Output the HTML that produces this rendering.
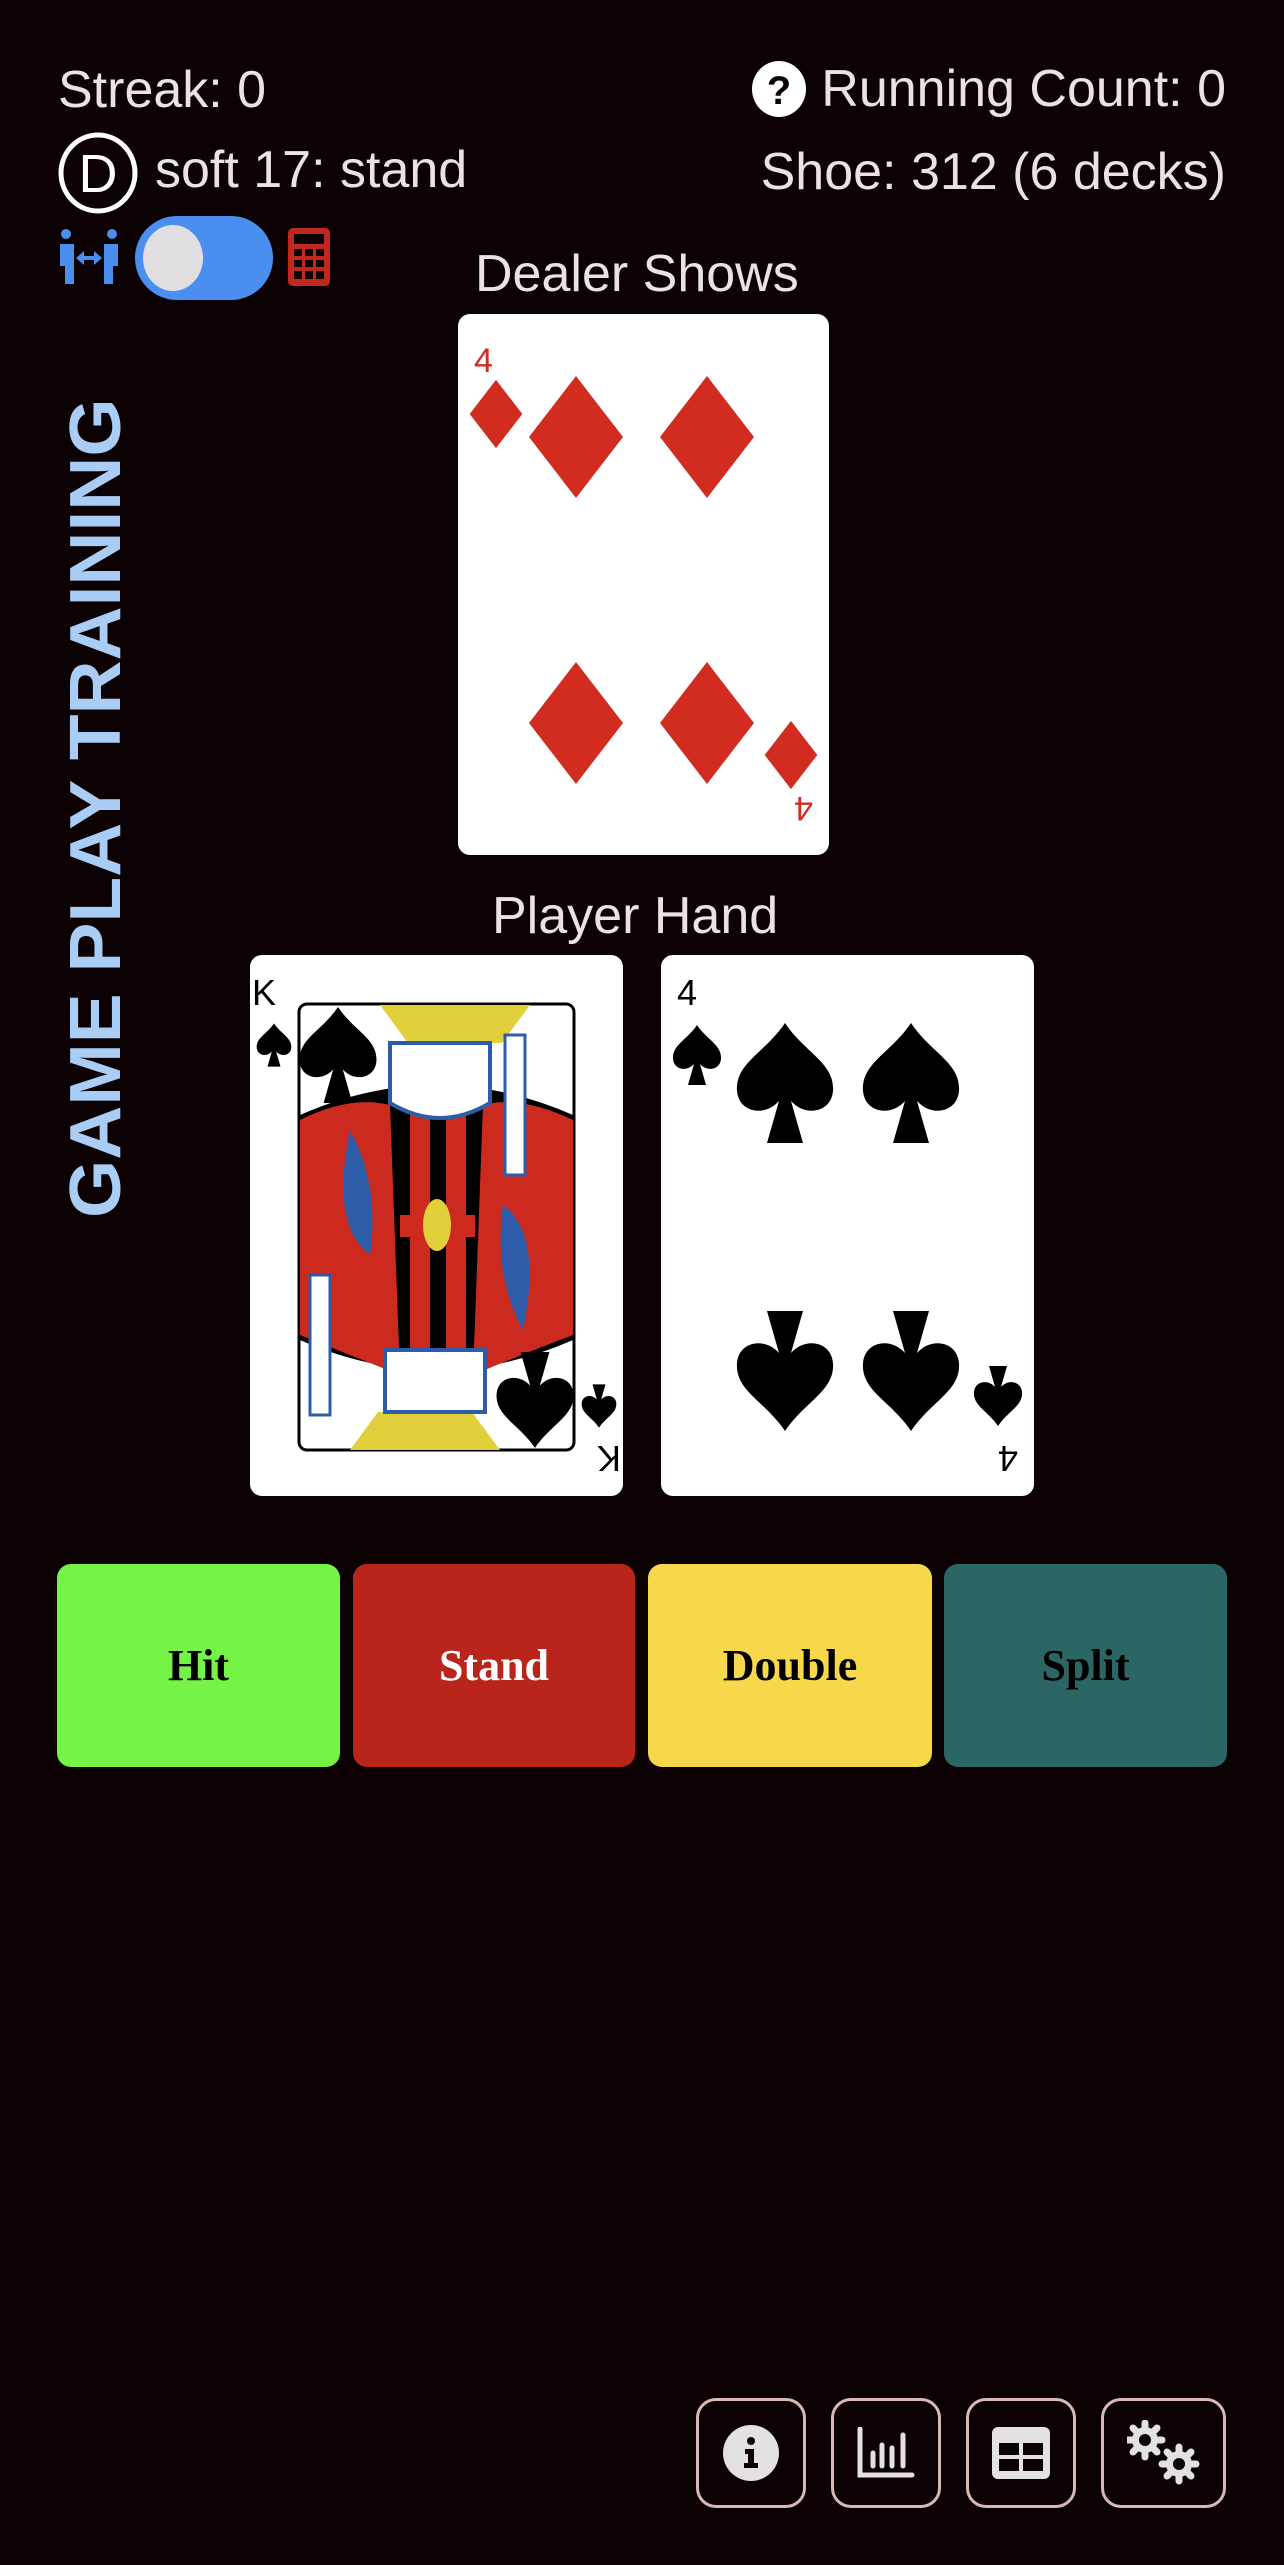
<!DOCTYPE html>
<html><head><meta charset="utf-8"><style>
*{margin:0;padding:0;box-sizing:border-box}
body{width:1284px;height:2565px;background:#0c0204;position:relative;overflow:hidden;font-family:"Liberation Sans",sans-serif;color:#e8e4e6}
.t{position:absolute;font-size:52px;white-space:nowrap;line-height:1;transform-origin:0 0}
.r{position:absolute;right:58px;font-size:52px;white-space:nowrap;line-height:1;display:flex;align-items:center;gap:14px}
.card{position:absolute;background:#fff;border-radius:12px;overflow:hidden}
.btn{position:absolute;top:1564px;height:203px;border-radius:14px;display:flex;align-items:center;justify-content:center;font-family:"Liberation Serif",serif;font-weight:bold;font-size:44px;color:#000}
.ib{position:absolute;top:2398px;height:110px;border:3px solid #d8b9b6;border-radius:20px;display:flex;align-items:center;justify-content:center}
</style></head><body>
<div class="t" style="left:58px;top:64px">Streak: 0</div>
<div class="r" style="top:60px"><svg width="56" height="58" viewBox="0 0 56 58"><ellipse cx="28" cy="29" rx="27" ry="28" fill="#fff"/><text x="28" y="44" text-anchor="middle" font-family="Liberation Sans" font-weight="bold" font-size="40" fill="#0c0204">?</text></svg><span>Running Count: 0</span></div>
<svg style="position:absolute;left:58px;top:132px" width="80" height="82" viewBox="0 0 80 82"><ellipse cx="40" cy="41" rx="37" ry="38" fill="none" stroke="#fff" stroke-width="5"/><text x="40" y="60" text-anchor="middle" font-family="Liberation Sans" font-size="54" fill="#fff">D</text></svg>
<div class="t" style="left:155px;top:144px">soft 17: stand</div>
<div class="r" style="top:146px">Shoe: 312 (6 decks)</div>
<svg style="position:absolute;left:58px;top:228px" width="62" height="58" viewBox="0 0 62 58"><g fill="#4a8ef0"><circle cx="8" cy="6" r="5"/><circle cx="54" cy="6" r="5"/><path d="M2 16h14v40h-9v-18h-5z"/><path d="M60 16h-14v40h9v-18h5z"/><path d="M18 30l8-7v5h10v-5l8 7-8 7v-5h-10v5z"/></g></svg>
<div style="position:absolute;left:135px;top:216px;width:138px;height:84px;border-radius:42px;background:#4a8ef0"></div>
<div style="position:absolute;left:143px;top:225px;width:60px;height:66px;border-radius:50%;background:#e2dfe3"></div>
<svg style="position:absolute;left:288px;top:228px" width="42" height="58" viewBox="0 0 42 58"><rect x="0" y="0" width="42" height="58" rx="5" fill="#c0271e"/><rect x="6" y="6" width="30" height="10" fill="#0c0204"/><g fill="#0c0204"><rect x="6" y="21" width="8" height="7"/><rect x="17" y="21" width="8" height="7"/><rect x="28" y="21" width="8" height="7"/><rect x="6" y="32" width="8" height="7"/><rect x="17" y="32" width="8" height="7"/><rect x="28" y="32" width="8" height="7"/><rect x="6" y="43" width="8" height="8"/><rect x="17" y="43" width="8" height="8"/><rect x="28" y="43" width="8" height="8"/></g></svg>
<div class="t" style="left:475px;top:248px">Dealer Shows</div>
<div class="t" style="left:60px;top:1218px;font-size:72px;font-weight:bold;color:#a9cdf5;transform:rotate(-90deg) scaleX(1.04)">GAME PLAY TRAINING</div>

<div class="card" style="left:458px;top:314px;width:371px;height:541px">
<svg width="371" height="541" viewBox="0 0 371 541">
<defs><path id="d" d="M0-61L47 0 0 61-47 0z" fill="#d22b20"/></defs>
<text x="16" y="58" font-family="Liberation Sans" font-size="34" fill="#d22b20">4</text>
<use href="#d" transform="translate(38,100) scale(0.56)"/>
<use href="#d" transform="translate(118,123)"/><use href="#d" transform="translate(249,123)"/>
<use href="#d" transform="translate(118,409)"/><use href="#d" transform="translate(249,409)"/>
<g transform="rotate(180 185.5 270.5)"><text x="16" y="58" font-family="Liberation Sans" font-size="34" fill="#d22b20">4</text><use href="#d" transform="translate(38,100) scale(0.56)"/></g>
</svg></div>

<div class="t" style="left:492px;top:890px">Player Hand</div>

<div class="card" style="left:250px;top:955px;width:373px;height:541px">
<svg width="373" height="541" viewBox="0 0 373 541">
<defs><path id="s" d="M0-60C-20-30-50-20-48 8-46 30-20 34-6 18L-18 60H18L6 18C20 34 46 30 48 8 50-20 20-30 0-60z" fill="#000"/></defs>
<text x="2" y="50" font-family="Liberation Sans" font-size="36">K</text>
<use href="#s" transform="translate(24,90) scale(0.36)"/>
<g transform="rotate(180 186.5 270.5)"><text x="2" y="50" font-family="Liberation Sans" font-size="36">K</text><use href="#s" transform="translate(24,90) scale(0.36)"/></g>
<rect x="49" y="49" width="275" height="446" rx="8" fill="#fff" stroke="#000" stroke-width="3"/>
<path d="M130 50h150l-28 38h-94z" fill="#e2cf3c"/><path d="M100 495h150l-28-38h-94z" fill="#e2cf3c"/>
<path d="M50 160Q186 100 323 160V385Q186 445 50 385z" fill="#000"/>
<path d="M50 165Q100 140 140 150L150 420Q100 400 50 380z" fill="#cc2a1f"/>
<path d="M323 165Q270 140 233 150L223 420Q270 400 323 380z" fill="#cc2a1f"/>
<path d="M100 175Q130 230 120 300 80 270 100 175z" fill="#2d5da8"/><path d="M273 375Q243 320 253 250 293 280 273 375z" fill="#2d5da8"/>
<path d="M160 150h20v250h-20zM196 150h20v250h-20z" fill="#cc2a1f"/><rect x="150" y="260" width="75" height="22" fill="#cc2a1f"/>
<ellipse cx="187" cy="270" rx="14" ry="26" fill="#e2cf3c"/>
<path d="M140 88h100v60q-50 30-100 0z" fill="#fff" stroke="#2d5da8" stroke-width="4"/>
<path d="M135 395h100v62h-100z" fill="#fff" stroke="#2d5da8" stroke-width="4"/>
<rect x="255" y="80" width="20" height="140" fill="#fff" stroke="#2d5da8" stroke-width="3"/><rect x="60" y="320" width="20" height="140" fill="#fff" stroke="#2d5da8" stroke-width="3"/>
<use href="#s" transform="translate(88,100) scale(0.8)"/><use href="#s" transform="translate(285,445) rotate(180) scale(0.8)"/>
</svg></div>

<div class="card" style="left:661px;top:955px;width:373px;height:541px">
<svg width="373" height="541" viewBox="0 0 373 541">
<defs><path id="s2" d="M0-60C-20-30-50-20-48 8-46 30-20 34-6 18L-18 60H18L6 18C20 34 46 30 48 8 50-20 20-30 0-60z" fill="#000"/></defs>
<text x="16" y="50" font-family="Liberation Sans" font-size="36">4</text>
<use href="#s2" transform="translate(36,100) scale(0.5)"/>
<use href="#s2" transform="translate(124,128)"/><use href="#s2" transform="translate(250,128)"/>
<use href="#s2" transform="translate(124,416) rotate(180)"/><use href="#s2" transform="translate(250,416) rotate(180)"/>
<g transform="rotate(180 186.5 270.5)"><text x="16" y="50" font-family="Liberation Sans" font-size="36">4</text><use href="#s2" transform="translate(36,100) scale(0.5)"/></g>
</svg></div>

<div class="btn" style="left:57px;width:283px;background:#75f447">Hit</div>
<div class="btn" style="left:353px;width:282px;background:#b9251b;color:#fff">Stand</div>
<div class="btn" style="left:648px;width:284px;background:#f7d84a">Double</div>
<div class="btn" style="left:944px;width:283px;background:#2c6664">Split</div>

<div class="ib" style="left:696px;width:110px"><svg width="58" height="58" viewBox="0 0 58 58"><ellipse cx="29" cy="29" rx="28" ry="28" fill="#e4e1e4"/><circle cx="29" cy="17" r="4" fill="#0c0204"/><path d="M23 25h9v14h4v5H22v-5h4v-9h-3z" fill="#0c0204"/></svg></div>
<div class="ib" style="left:831px;width:110px"><svg width="58" height="52" viewBox="0 0 58 52"><path d="M3 2v46h52" fill="none" stroke="#e4e1e4" stroke-width="5" stroke-linecap="round"/><g stroke="#e4e1e4" stroke-width="5" stroke-linecap="round"><path d="M16 26v13M25 18v21M35 21v18M46 8v31"/></g></svg></div>
<div class="ib" style="left:966px;width:110px"><svg width="58" height="52" viewBox="0 0 58 52"><rect width="58" height="52" rx="6" fill="#e4e1e4"/><g fill="#0c0204"><rect x="7" y="16" width="20" height="12"/><rect x="31" y="16" width="20" height="12"/><rect x="7" y="32" width="20" height="12"/><rect x="31" y="32" width="20" height="12"/></g></svg></div>
<div class="ib" style="left:1101px;width:125px"><svg width="74" height="66" viewBox="0 0 74 66"><g fill="#e4e1e4"><circle cx="18" cy="20" r="13"/><g stroke="#e4e1e4" stroke-width="7" stroke-linecap="round"><path d="M18 3v34M1 20h34M6 8l24 24M30 8L6 32"/></g><circle cx="52" cy="44" r="13"/><g stroke="#e4e1e4" stroke-width="7" stroke-linecap="round"><path d="M52 27v34M35 44h34M40 32l24 24M64 32L40 56"/></g></g><circle cx="18" cy="20" r="6" fill="#0c0204"/><circle cx="52" cy="44" r="6" fill="#0c0204"/></svg></div>
</body></html>
